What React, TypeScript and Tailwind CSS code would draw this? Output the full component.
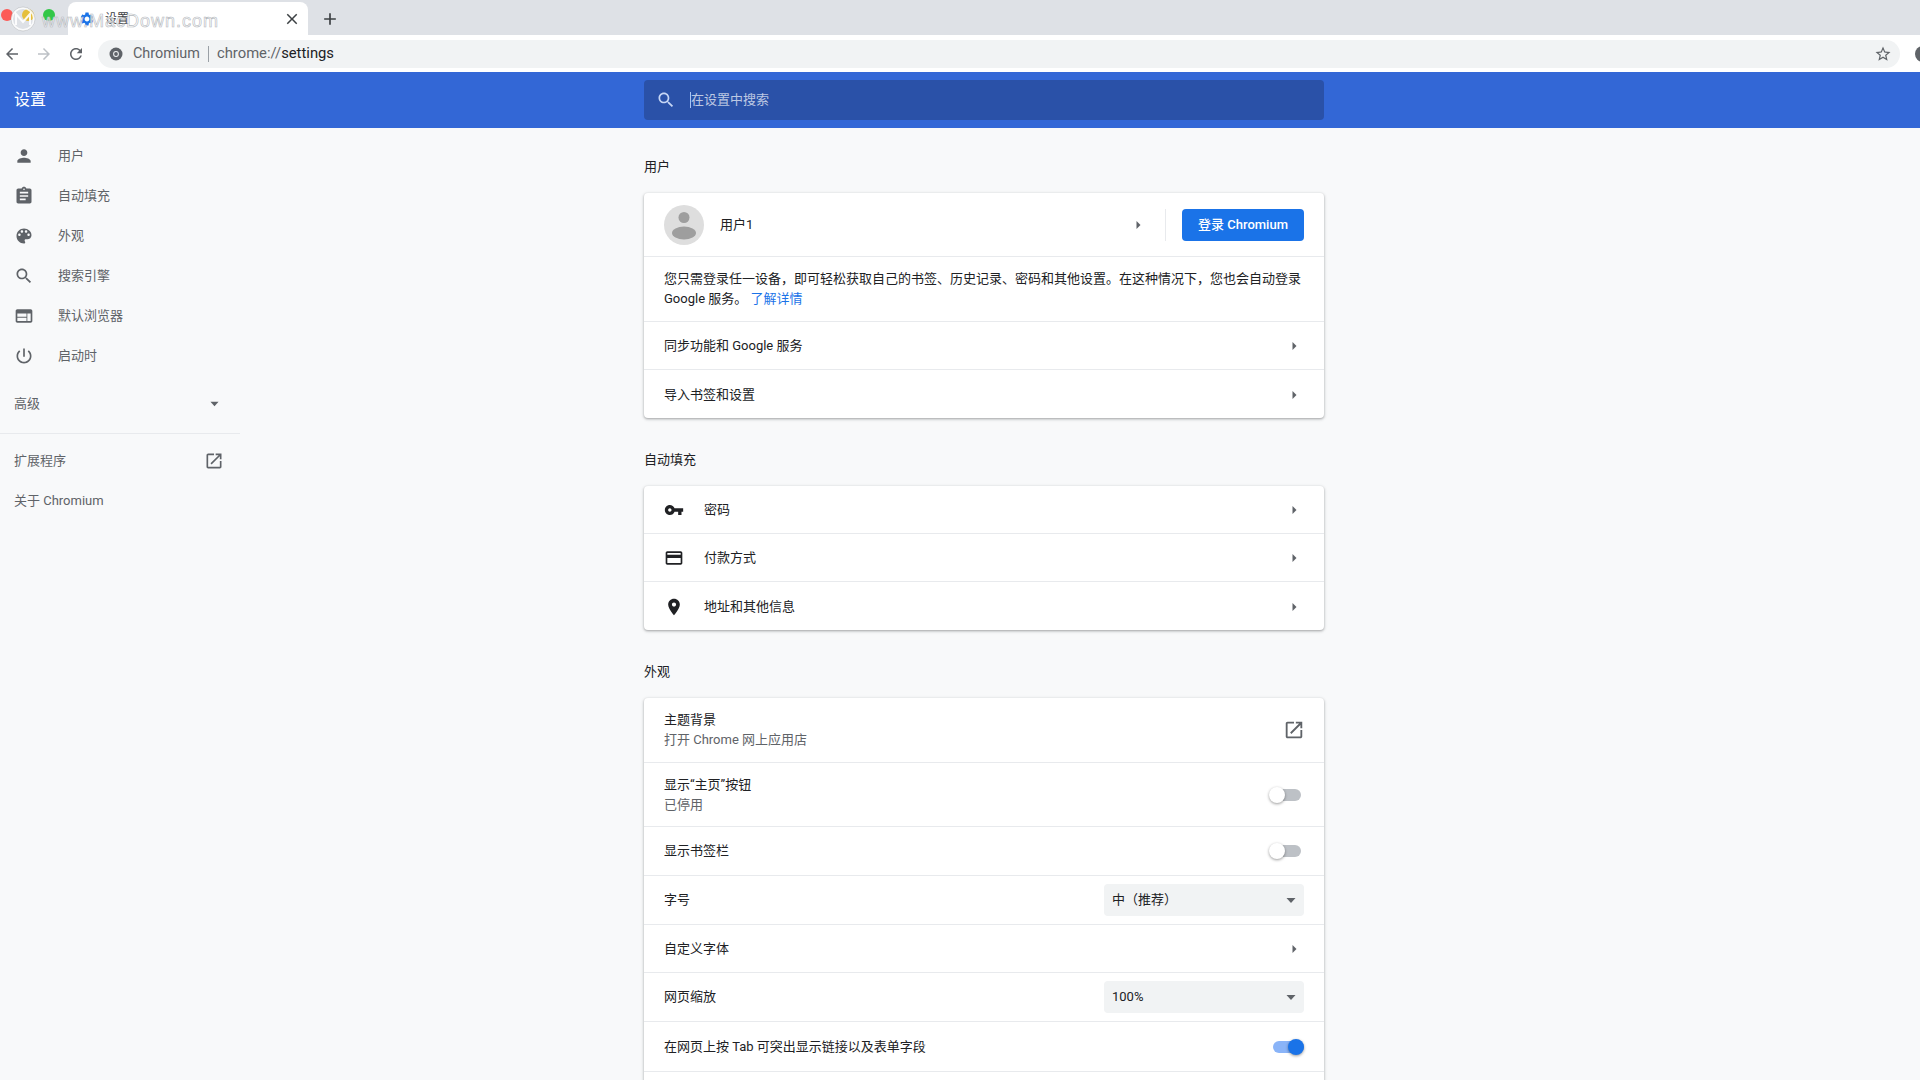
import React from "react";

const paths = {
  person: "M12 12c2.21 0 4-1.79 4-4s-1.79-4-4-4-4 1.79-4 4 1.79 4 4 4zm0 2c-2.67 0-8 1.34-8 4v2h16v-2c0-2.66-5.33-4-8-4z",
  assignment: "M19 3h-4.18C14.4 1.84 13.3 1 12 1c-1.3 0-2.4.84-2.82 2H5c-1.1 0-2 .9-2 2v14c0 1.1.9 2 2 2h14c1.1 0 2-.9 2-2V5c0-1.1-.9-2-2-2zm-7 0c.55 0 1 .45 1 1s-.45 1-1 1-1-.45-1-1 .45-1 1-1zm2 14H7v-2h7v2zm3-4H7v-2h10v2zm0-4H7V7h10v2z",
  palette: "M12 3c-4.97 0-9 4.03-9 9s4.03 9 9 9c.83 0 1.5-.67 1.5-1.5 0-.39-.15-.74-.39-1.01-.23-.26-.38-.61-.38-.99 0-.83.67-1.5 1.5-1.5H16c2.76 0 5-2.24 5-5 0-4.42-4.03-8-9-8zm-5.5 9c-.83 0-1.5-.67-1.5-1.5S5.67 9 6.5 9 8 9.67 8 10.5 7.33 12 6.5 12zm3-4C8.67 8 8 7.33 8 6.5S8.67 5 9.5 5s1.5.67 1.5 1.5S10.33 8 9.5 8zm5 0c-.83 0-1.5-.67-1.5-1.5S13.67 5 14.5 5s1.5.67 1.5 1.5S15.33 8 14.5 8zm3 4c-.83 0-1.5-.67-1.5-1.5S16.67 9 17.5 9s1.5.67 1.5 1.5-.67 1.5-1.5 1.5z",
  search: "M15.5 14h-.79l-.28-.27C15.41 12.59 16 11.11 16 9.5 16 5.91 13.09 3 9.5 3S3 5.91 3 9.5 5.91 16 9.5 16c1.61 0 3.09-.59 4.23-1.57l.27.28v.79l5 4.99L20.49 19l-4.99-5zm-6 0C7.01 14 5 11.99 5 9.5S7.01 5 9.5 5 14 7.01 14 9.5 11.99 14 9.5 14z",
  web: "M20 4H4c-1.1 0-2 .9-2 2v12c0 1.1.9 2 2 2h16c1.1 0 2-.9 2-2V6c0-1.1-.9-2-2-2zm-5 14H4v-4h11v4zm0-5H4V9h11v4zm5 5h-4V9h4v9z",
  power: "M13 3h-2v10h2V3zm4.83 2.17l-1.42 1.42C17.99 7.86 19 9.81 19 12c0 3.87-3.13 7-7 7s-7-3.13-7-7c0-2.19 1.01-4.14 2.58-5.42L6.17 5.17C4.23 6.82 3 9.26 3 12c0 4.97 4.03 9 9 9s9-4.03 9-9c0-2.74-1.23-5.18-3.17-6.83z",
  open: "M19 19H5V5h7V3H5c-1.11 0-2 .9-2 2v14c0 1.1.89 2 2 2h14c1.1 0 2-.9 2-2v-7h-2v7zM14 3v2h3.59l-9.83 9.83 1.41 1.41L19 6.41V10h2V3h-7z",
  key: "M12.65 10C11.83 7.67 9.61 6 7 6c-3.31 0-6 2.69-6 6s2.69 6 6 6c2.61 0 4.83-1.67 5.65-4H17v4h4v-4h2v-4H12.65zM7 14c-1.1 0-2-.9-2-2s.9-2 2-2 2 .9 2 2-.9 2-2 2z",
  card: "M20 4H4c-1.11 0-1.99.89-1.99 2L2 18c0 1.11.89 2 2 2h16c1.11 0 2-.89 2-2V6c0-1.11-.89-2-2-2zm0 14H4v-6h16v6zm0-10H4V6h16v2z",
  place: "M12 2C8.13 2 5 5.13 5 9c0 5.25 7 13 7 13s7-7.75 7-13c0-3.87-3.13-7-7-7zm0 9.5c-1.38 0-2.5-1.12-2.5-2.5s1.12-2.5 2.5-2.5 2.5 1.12 2.5 2.5-1.12 2.5-2.5 2.5z",
  back: "M20 11H7.83l5.59-5.59L12 4l-8 8 8 8 1.41-1.41L7.83 13H20v-2z",
  forward: "M12 4l-1.41 1.41L16.17 11H4v2h12.17l-5.58 5.59L12 20l8-8z",
  refresh: "M17.65 6.35C16.2 4.9 14.21 4 12 4c-4.42 0-7.99 3.58-7.99 8s3.57 8 7.99 8c3.73 0 6.84-2.55 7.73-6h-2.08c-.82 2.33-3.04 4-5.65 4-3.31 0-6-2.69-6-6s2.69-6 6-6c1.66 0 3.14.69 4.22 1.78L13 11h7V4l-2.35 2.35z",
  star: "M22 9.24l-7.19-.62L12 2 9.19 8.63 2 9.24l5.46 4.73L5.82 21 12 17.27 18.18 21l-1.63-7.03L22 9.24zM12 15.4l-3.76 2.27 1-4.28-3.32-2.88 4.38-.38L12 6.1l1.71 4.04 4.38.38-3.32 2.88 1 4.28L12 15.4z",
  gear: "M19.14 12.94c.04-.3.06-.61.06-.94 0-.32-.02-.64-.07-.94l2.03-1.58c.18-.14.23-.41.12-.61l-1.92-3.32c-.12-.22-.37-.29-.59-.22l-2.39.96c-.5-.38-1.03-.7-1.62-.94l-.36-2.54c-.04-.24-.24-.41-.48-.41h-3.84c-.24 0-.43.17-.47.41l-.36 2.54c-.59.24-1.13.57-1.62.94l-2.39-.96c-.22-.08-.47 0-.59.22L2.74 8.87c-.12.21-.08.47.12.61l2.03 1.58c-.05.3-.09.63-.09.94s.02.64.07.94l-2.03 1.58c-.18.14-.23.41-.12.61l1.92 3.32c.12.22.37.29.59.22l2.39-.96c.5.38 1.03.7 1.62.94l.36 2.54c.05.24.24.41.48.41h3.84c.24 0 .44-.17.47-.41l.36-2.54c.59-.24 1.13-.56 1.62-.94l2.39.96c.22.08.47 0 .59-.22l1.92-3.32c.12-.22.07-.47-.12-.61l-2.01-1.58zM12 15.6c-1.98 0-3.6-1.62-3.6-3.6s1.62-3.6 3.6-3.6 3.6 1.62 3.6 3.6-1.62 3.6-3.6 3.6z",
  close: "M19 6.41L17.59 5 12 10.59 6.41 5 5 6.41 10.59 12 5 17.59 6.41 19 12 13.41 17.59 19 19 17.59 13.41 12z",
  plus: "M19 13h-6v6h-2v-6H5v-2h6V5h2v6h6v2z",
};

const Icon = ({ d, className }: { d: string; className: string }) => (
  <svg viewBox="0 0 24 24" fill="currentColor" className={className}>
    <path d={d} />
  </svg>
);

const Arrow = () => (
  <svg viewBox="0 0 20 20" fill="#5f6368" className="w-5 h-5 shrink-0">
    <path d="M8.5 6l4 4-4 4z" />
  </svg>
);

const Caret = ({ className }: { className: string }) => (
  <svg viewBox="0 0 10 6" fill="#5f6368" className={className}>
    <path d="M0.5 0.5h9L5 5.5z" />
  </svg>
);

const NavItem = ({ icon, label }: { icon: string; label: string }) => (
  <div className="flex items-center h-10 pl-[14px] text-[13px] text-[#5f6368]">
    <Icon d={icon} className="w-5 h-5" />
    <span className="ml-[24px]">{label}</span>
  </div>
);

const SectionTitle = ({ children }: { children: React.ReactNode }) => (
  <h2 className="mt-8 mb-4 h-5 leading-5 text-[13px] text-[#202124]">{children}</h2>
);

const Card = ({ children }: { children: React.ReactNode }) => (
  <div className="bg-white rounded shadow-[0_1px_2px_rgba(60,64,67,0.3),0_1px_3px_1px_rgba(60,64,67,0.15)] divide-y divide-[#e8eaed]">
    {children}
  </div>
);

const LinkRow = ({ icon, label }: { icon?: string; label: string }) => (
  <div className="flex items-center h-12 pt-px pl-5 pr-5 text-[13px] text-[#202124]">
    {icon && <Icon d={icon} className="w-5 h-5 mr-5" />}
    <span className="flex-1">{label}</span>
    <Arrow />
  </div>
);

const Toggle = ({ on }: { on?: boolean }) =>
  on ? (
    <div className="flex items-center justify-end w-[31px] h-3 rounded-full bg-[#8ab4f8]">
      <div className="w-4 h-4 rounded-full bg-[#1a73e8] shadow-[0_1px_3px_rgba(0,0,0,0.4)]" />
    </div>
  ) : (
    <div className="flex items-center w-[31px] h-3 mr-[3px] rounded-full bg-[#bdc1c6]">
      <div className="w-4 h-4 -ml-[1px] rounded-full bg-white shadow-[0_1px_3px_rgba(0,0,0,0.4)]" />
    </div>
  );

const Select = ({ value }: { value: string }) => (
  <div className="flex items-center justify-between w-[200px] h-8 pl-2 pr-2 rounded bg-[#f1f3f4] text-[13px] text-[#202124]">
    <span>{value}</span>
    <Caret className="w-[10px] h-[7px]" />
  </div>
);

const App = () => {
  return (
    <div className="h-screen overflow-hidden relative bg-[#f8f9fa] font-['Roboto','Noto_Sans_CJK_SC',sans-serif]">
      {/* Tab strip */}
      <div className="flex h-[35px] bg-[#dee1e6]">
        <div className="flex w-[68px] pt-[9px] pl-[1px] gap-[9px]">
          <div className="w-3 h-3 rounded-full bg-[#fc5b57]" />
          <div className="w-3 h-3 rounded-full bg-[#e5bf3c]" />
          <div className="w-3 h-3 rounded-full bg-[#33c748]" />
        </div>
        <div className="flex items-center w-[240px] mt-[2px] pl-[11px] pr-[7px] bg-white rounded-t-lg">
          <Icon d={paths.gear} className="w-4 h-4 text-[#1a73e8]" />
          <span className="flex-1 ml-[10px] text-xs text-[#3c4043]">设置</span>
          <Icon d={paths.close} className="w-[18px] h-[18px] text-[#3c4043]" />
        </div>
        <div className="flex items-center ml-[12px] mt-[2px]">
          <Icon d={paths.plus} className="w-5 h-5 text-[#3c4043]" />
        </div>
      </div>

      {/* Toolbar */}
      <div className="flex items-center h-[37px] bg-white">
        <Icon d={paths.back} className="ml-[3px] w-[18px] h-[18px] text-[#5f6368]" />
        <Icon d={paths.forward} className="ml-[14px] w-[18px] h-[18px] text-[#bdc1c6]" />
        <Icon d={paths.refresh} className="ml-[14px] w-[18px] h-[18px] text-[#5f6368]" />
        <div className="flex items-center flex-1 h-7 ml-[13px] pl-[11px] pr-2 rounded-full bg-[#f1f3f4] text-[14.8px]">
          <svg viewBox="0 0 14 14" className="w-[14px] h-[14px]">
            <circle cx="7" cy="7" r="6.5" fill="#5f6368" />
            <circle cx="7" cy="7" r="2.9" fill="#f1f3f4" />
            <circle cx="7" cy="7" r="1.9" fill="#5f6368" />
          </svg>
          <span className="ml-[10px] text-[14.4px] text-[#5f6368]">Chromium</span>
          <span className="w-px h-4 mx-[8px] bg-[#9aa0a6]" />
          <span className="text-[#5f6368]">chrome://</span>
          <span className="flex-1 text-[#202124]">settings</span>
          <Icon d={paths.star} className="w-[18px] h-[18px] text-[#5f6368]" />
        </div>
        <div className="w-[20px] overflow-hidden pl-[15px]">
          <div className="w-4 h-4 rounded-full bg-[#5f6368]" />
        </div>
      </div>

      {/* Blue header */}
      <div className="flex items-center h-14 bg-[#3367d6]">
        <div className="w-[644px] pl-[14px] text-base text-white">设置</div>
        <div className="flex items-center w-[680px] h-10 pl-3 rounded-sm bg-[#2a51a8] text-[13px] text-white/70">
          <Icon d={paths.search} className="w-5 h-5 text-[#c6d6f5]" />
          <span className="w-px h-4 ml-[14px] bg-[#a9c4f5]" />
          <span>在设置中搜索</span>
        </div>
      </div>

      <div className="flex">
        {/* Sidebar */}
        <div className="w-[240px] shrink-0 pt-2 text-[13px] text-[#5f6368]">
          <NavItem icon={paths.person} label="用户" />
          <NavItem icon={paths.assignment} label="自动填充" />
          <NavItem icon={paths.palette} label="外观" />
          <NavItem icon={paths.search} label="搜索引擎" />
          <NavItem icon={paths.web} label="默认浏览器" />
          <NavItem icon={paths.power} label="启动时" />
          <div className="flex items-center justify-between h-10 mt-2 pl-[14px] pr-[21px]">
            <span>高级</span>
            <Caret className="w-[9px] h-[6px]" />
          </div>
          <div className="h-px mt-[9px] bg-[#e8eaed]" />
          <div className="flex items-center justify-between h-10 mt-[7px] pl-[14px] pr-4">
            <span>扩展程序</span>
            <Icon d={paths.open} className="w-5 h-5" />
          </div>
          <div className="flex items-center h-10 pl-[14px]">关于 Chromium</div>
        </div>

        {/* Settings */}
        <div className="w-[680px] ml-[404px] shrink-0">
          <h2 className="mt-[29px] mb-4 h-5 leading-5 text-[13px] text-[#202124]">用户</h2>
          <Card>
            <div className="flex items-center h-16 pl-5 pr-5 text-[13px] text-[#202124]">
              <svg viewBox="0 0 40 40" className="w-10 h-10 shrink-0">
                <circle cx="20" cy="20" r="20" fill="#dedede" />
                <circle cx="20" cy="12.5" r="5.5" fill="#9e9e9e" />
                <ellipse cx="20" cy="28" rx="12" ry="6.5" fill="#9e9e9e" />
              </svg>
              <span className="flex-1 ml-4">用户1</span>
              <Arrow />
              <div className="w-px h-8 ml-[17px] mr-4 bg-[#e8eaed]" />
              <div className="flex items-center justify-center w-[122px] h-8 rounded bg-[#1a73e8] font-medium text-white">
                登录 Chromium
              </div>
            </div>
            <div className="h-[65px] pl-5 pr-[18px] pt-3 text-[13px] leading-5 text-[#202124]">
              您只需登录任一设备，即可轻松获取自己的书签、历史记录、密码和其他设置。在这种情况下，您也会自动登录 Google 服务。 <span className="text-[#1a73e8]">了解详情</span>
            </div>
            <LinkRow label="同步功能和 Google 服务" />
            <LinkRow label="导入书签和设置" />
          </Card>

          <SectionTitle>自动填充</SectionTitle>
          <Card>
            <LinkRow icon={paths.key} label="密码" />
            <LinkRow icon={paths.card} label="付款方式" />
            <LinkRow icon={paths.place} label="地址和其他信息" />
          </Card>

          <SectionTitle>外观</SectionTitle>
          <Card>
            <div className="flex items-center justify-between h-[65px] pl-5 pr-5 text-[13px] leading-5 text-[#202124]">
              <div>
                <div>主题背景</div>
                <div className="text-[#5f6368]">打开 Chrome 网上应用店</div>
              </div>
              <Icon d={paths.open} className="w-[22px] h-[22px] -mr-[1px] text-[#5f6368]" />
            </div>
            <div className="flex items-center justify-between h-[64px] pl-5 pr-5 text-[13px] leading-5 text-[#202124]">
              <div>
                <div>显示“主页”按钮</div>
                <div className="text-[#5f6368]">已停用</div>
              </div>
              <Toggle />
            </div>
            <div className="flex items-center justify-between h-[49px] pl-5 pr-5 text-[13px] text-[#202124]">
              <span>显示书签栏</span>
              <Toggle />
            </div>
            <div className="flex items-center justify-between h-[49px] pl-5 pr-5 text-[13px] text-[#202124]">
              <span>字号</span>
              <Select value="中（推荐）" />
            </div>
            <LinkRow label="自定义字体" />
            <div className="flex items-center justify-between h-[49px] pl-5 pr-5 text-[13px] text-[#202124]">
              <span>网页缩放</span>
              <Select value="100%" />
            </div>
            <div className="flex items-center justify-between h-[50px] pl-5 pr-5 text-[13px] text-[#202124]">
              <span>在网页上按 Tab 可突出显示链接以及表单字段</span>
              <Toggle on />
            </div>
            <div className="h-12" />
          </Card>
        </div>
      </div>

      {/* Site watermark over the tab strip */}
      <div className="absolute top-[5px] left-[10px] flex items-center pointer-events-none">
        <svg viewBox="0 0 26 26" className="w-[26px] h-[26px]" fill="none">
          <circle cx="13" cy="13" r="11" stroke="#ffffff" strokeOpacity="0.85" strokeWidth="2" />
          <circle cx="13" cy="13" r="12" stroke="#8a8d91" strokeOpacity="0.5" strokeWidth="0.6" />
          <path d="M6 19V8l7 8 7-8v11" stroke="#ffffff" strokeOpacity="0.9" strokeWidth="2" />
        </svg>
        <span className="ml-[6px] mt-[4px] text-[18px] leading-6 tracking-[1px] font-['Liberation_Sans',sans-serif] text-white/70 [-webkit-text-stroke:0.6px_#b4b8bd]">
          www.MacDown.com
        </span>
      </div>
    </div>
  );
};

export default App;
